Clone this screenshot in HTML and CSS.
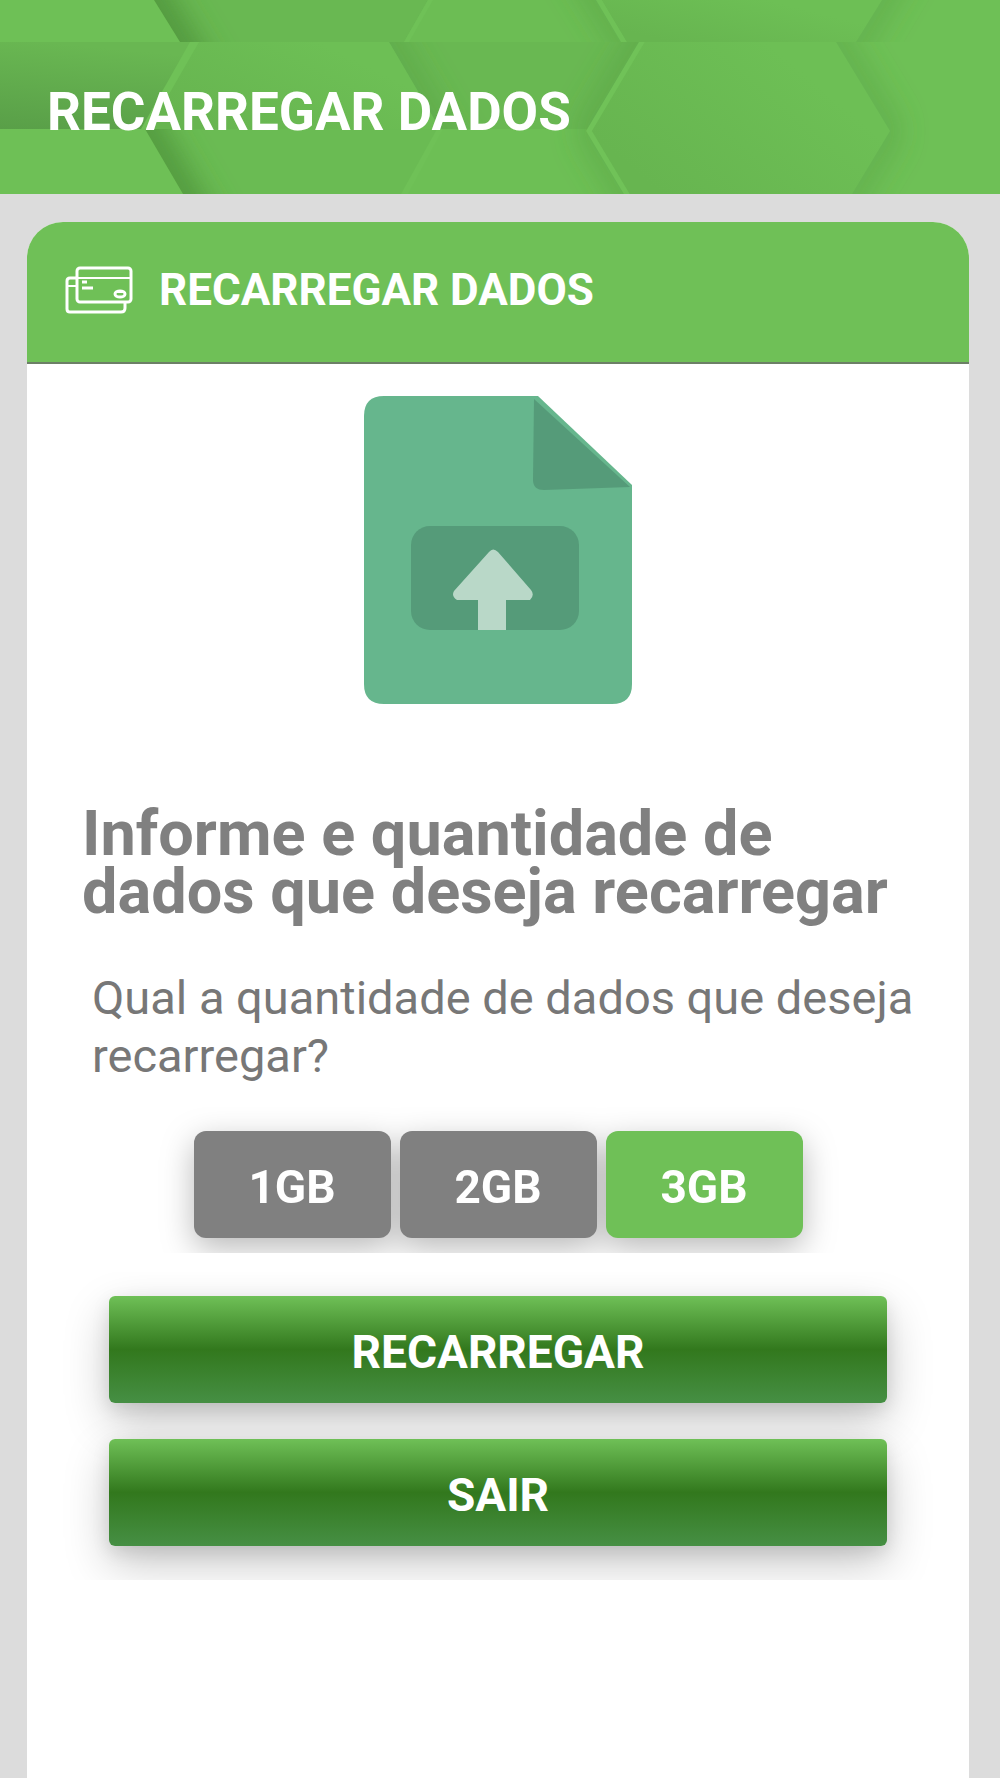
FILE: index.html
```html
<!DOCTYPE html>
<html lang="pt-BR">
<head>
<meta charset="utf-8">
<meta name="viewport" content="width=device-width, initial-scale=1">
<title>Recarregar dados</title>
<link rel="stylesheet" href="styles.css">
</head>
<body class="page">
<header class="topbar">
  <svg class="topbar-pattern" viewBox="0 0 1000 194" preserveAspectRatio="xMinYMin slice" aria-hidden="true">
    <defs>
      <linearGradient id="lit" x1="0" y1="0.6" x2="1" y2="0"><stop offset="0" stop-color="#67b550"/><stop offset="0.7" stop-color="#6dbf55"/></linearGradient>
      <linearGradient id="left" x1="0.2" y1="0" x2="0" y2="1"><stop offset="0" stop-color="#69b752"/><stop offset="1" stop-color="#599f48"/></linearGradient>
      <filter id="soft" x="-50%" y="-50%" width="200%" height="200%"><feGaussianBlur stdDeviation="16"/></filter>
      <clipPath id="top"><path d="M0 0H1000V42H0z"/></clipPath>
      <clipPath id="middle"><path d="M0 42H1000V129H0z"/></clipPath>
      <clipPath id="bottom"><path d="M0 129H1000V194H0z"/></clipPath>
      <clipPath id="lower"><path d="M0 42H1000V194H0z"/></clipPath>
    </defs>
    <path fill="#6ec056" d="M0 0H1000V194H0z"/>
    <g clip-path="url(#top)">
      <path fill="#69b852" d="M154 0H428L404 42H180z"/>
      <path fill="#6cbd54" d="M428 0H598L623 42H404z"/>
      <path fill="none" stroke="#468a36" stroke-width="24" filter="url(#soft)" d="M130 -40L205 84"/>
      <path fill="none" stroke="#4c913b" stroke-width="9" filter="url(#soft)" d="M573 -40L650 84M906 -40L832 84"/>
      <path fill="#6ec056" d="M0 0H154L180 42H0z"/>
      <path fill="#6fc157" d="M428 0H433L409 42H404zM596 0H602L627 42H621z"/>
      <path fill="url(#lit)" d="M602 0H882L856 42H627z"/>
    </g>
    <g clip-path="url(#middle)">
      <path fill="url(#left)" d="M0 42H193L143 129H0z"/>
      <path fill="#69b852" d="M389 42H642L589 131L440 129z"/>
      <path fill="none" stroke="#4c913b" stroke-width="9" filter="url(#soft)" d="M366 2L466 173"/>
      <path fill="url(#lit)" d="M199 42H389L440 129H143z"/>
      <path fill="#6fc157" d="M190 42H199L149 129H141z"/>
    </g>
    <g clip-path="url(#bottom)">
      <path fill="#6abb53" d="M145 129H439L402 194H183z"/>
      <path fill="#6dbf55" d="M439 129H589L627 194H402z"/>
      <path fill="none" stroke="#468a36" stroke-width="24" filter="url(#soft)" d="M122 89L206 234"/>
      <path fill="#6ec056" d="M0 129H145L183 194H0z"/>
      <path fill="#6fc157" d="M437 129H443L408 194H401z"/>
    </g>
    <g clip-path="url(#lower)">
      <path fill="none" stroke="#4c913b" stroke-width="9" filter="url(#soft)" d="M666 2L589 131L650 234M813 2L890 131L828 234"/>
      <path fill="url(#lit)" d="M642 42H836L890 131L852 194H627L589 131z"/>
      <path fill="none" stroke="#70c258" stroke-width="5" d="M646 35L589 131L631 201"/>
    </g>
  </svg>
  <h1 class="topbar-title">RECARREGAR DADOS</h1>
</header>
<main class="card">
  <div class="card-head">
    <svg class="card-icon" viewBox="0 0 68 48" fill="none" stroke="#fff" stroke-width="3" aria-hidden="true">
      <rect x="12" y="2" width="54" height="34" rx="3"/>
      <path stroke-width="2" d="M12 12H66M2 20H11"/>
      <path d="M11 12H5Q2 12 2 15V43Q2 46 5 46H56Q60 46 60 42V37"/>
      <path d="M17 16H22M17 22H28"/>
      <ellipse cx="55" cy="28" rx="5" ry="3"/>
      <path stroke-width="2" d="M50 26H60"/>
    </svg>
    <h2 class="card-title">RECARREGAR DADOS</h2>
  </div>
  <div class="card-body">
    <svg class="file-icon" viewBox="0 0 268 308" aria-hidden="true">
      <path fill="#66b68d" d="M20 0H174L268 89V288Q268 308 248 308H20Q0 308 0 288V20Q0 0 20 0z"/>
      <path fill="#559b79" d="M170 3L266 91L180 94Q169 94 169 84z"/>
      <rect x="47" y="130" width="168" height="104" rx="19" fill="#559b79"/>
      <path fill="#b9d8c8" d="M125 156Q129 151 134 156L167 194Q171 199 166 204H142V234H114V204H93Q87 200 90 195z"/>
    </svg>
    <h3 class="heading">Informe e quantidade de dados que deseja recarregar</h3>
    <p class="question" id="question">Qual a quantidade de dados que deseja recarregar?</p>
    <div class="options">
      <div class="option-row" role="group" aria-labelledby="question">
        <button class="option" type="button" aria-pressed="false">1GB</button>
        <button class="option" type="button" aria-pressed="false">2GB</button>
        <button class="option option-selected" type="button" aria-pressed="true">3GB</button>
      </div>
    </div>
    <div class="actions">
      <button class="action" type="button">RECARREGAR</button>
      <button class="action" type="button">SAIR</button>
    </div>
  </div>
</main>
</body>
</html>
```
FILE: styles.css
```css
* {
  box-sizing: border-box;
}

.page {
  margin: 0;
  min-height: 100vh;
  display: flex;
  flex-direction: column;
  background: #dcdcdc;
  font-family: Roboto, "Liberation Sans", sans-serif;
}

.topbar {
  position: relative;
  padding: 82px 47px 52px;
  background: #6ec056;
}

.topbar-pattern {
  position: absolute;
  inset: 0;
  width: 100%;
  height: 100%;
}

.topbar-title {
  position: relative;
  margin: 0;
  color: #fff;
  font-size: 53px;
  line-height: 60px;
  font-weight: 700;
}

.card {
  flex: 1;
  margin: 28px 31px 0 27px;
  border-radius: 36px 36px 0 0;
  background: #fff;
  overflow: hidden;
}

.card-head {
  display: flex;
  align-items: center;
  gap: 26px;
  padding: 43px 38px 47px;
  border-bottom: 2px solid #6c7f66;
  background: #6fc057;
}

.card-icon {
  flex: none;
  width: 68px;
  height: 48px;
}

.card-title {
  margin: 0;
  color: #fff;
  font-size: 44px;
  line-height: 50px;
  font-weight: 700;
}

.card-body {
  display: flex;
  flex-direction: column;
  padding: 32px 0 0;
}

.file-icon {
  align-self: center;
  width: 268px;
  height: 308px;
}

.heading {
  margin: 101px 36px 0 55px;
  color: #808080;
  font-size: 63px;
  line-height: 58px;
  font-weight: 700;
}

.question {
  margin: 48px 36px 0 65px;
  color: #777;
  font-size: 47px;
  line-height: 58px;
}

.options {
  margin-top: 22px;
  padding: 24px 0 15px;
  overflow: hidden;
}

.option-row {
  display: flex;
  justify-content: center;
  gap: 9px;
  filter: drop-shadow(0 10px 16px rgba(0, 0, 0, 0.28));
}

.option {
  width: 197px;
  height: 107px;
  padding: 4px 0 0;
  border: 0;
  border-radius: 12px;
  background: #808080;
  color: #fff;
  font: 700 46px/52px Roboto, "Liberation Sans", sans-serif;
}

.option-selected {
  background: #6fc057;
}

.actions {
  display: flex;
  flex-direction: column;
  gap: 36px;
  margin-top: 19px;
  padding: 24px 82px 34px;
  overflow: hidden;
}

.action {
  height: 107px;
  padding: 4px 0 0;
  border: 0;
  border-radius: 6px;
  background: linear-gradient(#6fc057, #32781d 50%, #468f44);
  box-shadow: 0 18px 46px rgba(0, 0, 0, 0.22), 0 6px 18px rgba(0, 0, 0, 0.1);
  color: #fff;
  font: 700 46px/52px Roboto, "Liberation Sans", sans-serif;
}
```
